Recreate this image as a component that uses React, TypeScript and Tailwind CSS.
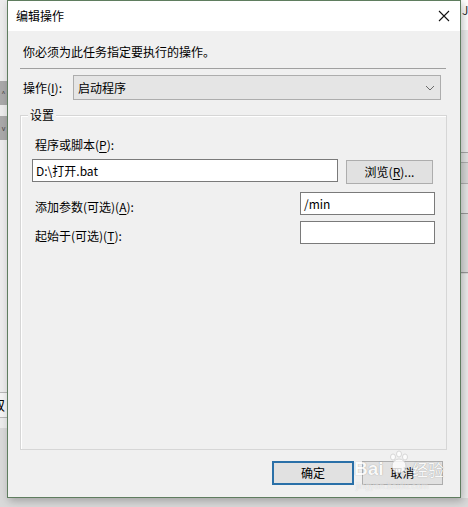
import React from 'react';

const font = "font-['Noto_Sans_CJK_SC','Noto_Sans',sans-serif]";

const Key: React.FC<{ k: string }> = ({ k }) => <span className="underline underline-offset-2">{k}</span>;

const TextBox: React.FC<{ value?: string; className?: string }> = ({ value = '', className = '' }) => (
  <div className={`h-[23px] bg-white border border-[#7a7a7a] flex items-center pl-[3px] text-[12px] text-black ${className}`}>
    {value}
  </div>
);

const EditActionDialog: React.FC = () => {
  return (
    <div className="absolute left-[7px] top-0 w-[454px] h-[498px] border border-[#5f7d5f] bg-[#f0f0f0] flex flex-col shadow-[2px_3px_8px_rgba(0,0,0,0.25)]">
      {/* Title bar */}
      <div className="h-[30px] bg-white flex items-center justify-between pl-[8px] pr-[10px]">
        <span className="text-[12px] text-black">编辑操作</span>
        <svg width="12" height="12" viewBox="0 0 12 12">
          <path d="M1 1 L11 11 M11 1 L1 11" stroke="#111" strokeWidth="1.1" />
        </svg>
      </div>

      {/* Body */}
      <div className="mt-[13px] pl-[15px] h-[16px] leading-[16px] text-[12px] text-black">你必须为此任务指定要执行的操作。</div>
      <div className="mt-[8px] ml-[12px] mr-[14px] h-px bg-[#a0a0a0]" />

      <div className="mt-[6px] flex items-center">
        <span className="ml-[15px] w-[50px] text-[12px] text-black">操作(<Key k="I" />):</span>
        <div className="ml-0 mr-[19px] flex-1 h-[25px] bg-[#e5e5e5] border border-[#adadad] flex items-center justify-between pl-[4px] pr-[5px] text-[12px] text-black">
          <span>启动程序</span>
          <svg width="10" height="6" viewBox="0 0 10 6">
            <path d="M1 1 L5 5 L9 1" fill="none" stroke="#6a6a6a" strokeWidth="1" />
          </svg>
        </div>
      </div>

      {/* Group box */}
      <div className="relative mt-[15px] ml-[12px] mr-[13px] h-[335px] border border-[#d6d6d6] shadow-[inset_1px_1px_0_#ffffff]">
        <span className="absolute -top-[9px] left-[7px] px-[2px] bg-[#f0f0f0] text-[12px] leading-[16px] text-black">设置</span>

        <div className="mt-[21px] ml-[14px] h-[16px] leading-[16px] text-[12px] text-black">程序或脚本(<Key k="P" />):</div>
        <div className="mt-[6px] ml-[11px] flex items-start gap-[8px]">
          <TextBox value="D:\打开.bat" className="w-[306px]" />
          <div className="mt-[1px] w-[87px] h-[24px] bg-[#e1e1e1] border border-[#adadad] flex items-center justify-center text-[12px] text-black">
            浏览(<Key k="R" />)...
          </div>
        </div>

        <div className="mt-[8px] flex items-start justify-between pr-[11px]">
          <span className="ml-[14px] pt-[7px] leading-[16px] text-[12px] text-black">添加参数(可选)(<Key k="A" />):</span>
          <TextBox value="/min" className="w-[135px]" />
        </div>
        <div className="mt-[6px] flex items-start justify-between pr-[11px]">
          <span className="ml-[14px] pt-[7px] leading-[16px] text-[12px] text-black">起始于(可选)(<Key k="T" />):</span>
          <TextBox className="w-[135px]" />
        </div>
      </div>

      {/* Buttons */}
      <div className="mt-[11px] mr-[17px] flex justify-end gap-[8px]">
        <div className="w-[82px] h-[24px] bg-[#e1e1e1] border-2 border-[#2a70a8] flex items-center justify-center text-[12px] text-black">确定</div>
        <div className="w-[81px] h-[24px] bg-[#e1e1e1] border border-[#adadad] flex items-center justify-center text-[12px] text-black">取消</div>
      </div>
    </div>
  );
};

const Watermark: React.FC = () => (
  <div className="absolute left-[354px] top-[447px] w-[100px] h-[50px] opacity-80 pointer-events-none">
    <div className="absolute left-[0px] top-[12px] text-[19px] font-bold leading-[20px] text-white [text-shadow:0_0_1px_rgba(0,0,0,0.45)] font-['Liberation_Sans',sans-serif]">Bai</div>
    <svg className="absolute left-[34px] top-[3px]" width="22" height="26" viewBox="0 0 22 26">
      <g fill="#ffffff" stroke="#c8c8c8" strokeWidth="0.8">
        <ellipse cx="5" cy="7" rx="2.5" ry="3" />
        <ellipse cx="11" cy="4" rx="2.5" ry="3" />
        <ellipse cx="17" cy="7" rx="2.5" ry="3" />
        <ellipse cx="11" cy="16" rx="7" ry="7" />
      </g>
    </svg>
    <div className="absolute left-[58px] top-[13px] text-[16px] leading-[18px] text-white [text-shadow:0_0_1px_rgba(0,0,0,0.45)]">经验</div>
    <div className="absolute left-[2px] top-[34px] text-[9px] leading-[10px] text-white/70 [text-shadow:0_0_1px_rgba(0,0,0,0.2)] font-['Liberation_Sans',sans-serif]">jingyan.baidu.com</div>
  </div>
);

const App: React.FC = () => {
  return (
    <div className={`relative w-[468px] h-[507px] overflow-hidden bg-[#d9d9d9] ${font}`}>
      {/* desktop behind the dialog, left edge */}
      <div className="absolute left-0 top-0 w-[7px] h-[428px] bg-[#ececec]" />
      <div className="absolute left-0 top-[81px] w-[7px] h-[24px] bg-[#a9a9a9] flex items-center justify-center text-[7px] text-[#444]">^</div>
      <div className="absolute left-0 top-[116px] w-[7px] h-[24px] bg-[#a9a9a9] flex items-center justify-center text-[7px] text-[#444]">v</div>
      <div className="absolute left-0 top-[392px] w-[7px] h-[26px] bg-[#f4f4f4] border-y border-[#b8b8b8] overflow-hidden">
        <span className="absolute -left-[9px] top-[3px] text-[14px] leading-[16px] text-black">取</span>
      </div>

      {/* desktop behind the dialog, right edge */}
      <div className="absolute left-[461px] top-0 w-[7px] h-[30px] bg-white overflow-hidden">
        <span className="absolute left-[1px] top-[4px] text-[12px] leading-[12px] text-[#333]">J</span>
      </div>
      <div className="absolute left-[461px] top-[30px] w-[7px] h-[122px] bg-[#ececec]" />
      <div className="absolute left-[461px] top-[152px] w-[7px] h-[10px] bg-[#e4e4e4] border-t border-[#a8a8a8]" />
      <div className="absolute left-[461px] top-[162px] w-[7px] h-[22px] bg-[#d8d8d8] border-y border-[#b0b0b0]" />
      <div className="absolute left-[461px] top-[184px] w-[7px] h-[30px] bg-[#e6e6e6] border-b border-[#9a9a9a]" />
      <div className="absolute left-[461px] top-[214px] w-[7px] h-[59px] bg-[#dcdcdc] border-b border-[#9a9a9a]" />
      <div className="absolute left-[461px] top-[274px] w-[7px] h-[224px] bg-[#ececec]" />

      <EditActionDialog />
      <Watermark />
    </div>
  );
};

export default App;
